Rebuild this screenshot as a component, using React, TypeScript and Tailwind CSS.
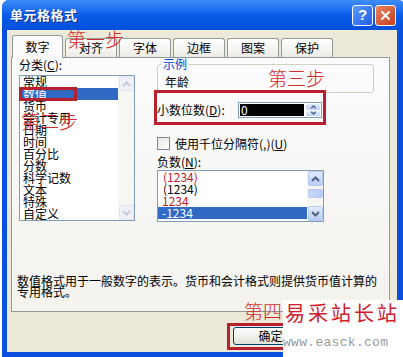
import React from 'react';

const categories = ['常规', '数值', '货币', '会计专用', '日期', '时间', '百分比', '分数', '科学记数', '文本', '特殊', '自定义'];

const negatives = [
  { text: '(1234)', red: true, pad: 'pl-[5px]' },
  { text: '(1234)', red: false, pad: 'pl-[5px]' },
  { text: '1234', red: true, pad: 'pl-[4px]' },
  { text: '-1234', red: false, pad: 'pl-[4px]' },
];

const tabs = ['对齐', '字体', '边框', '图案', '保护'];

// small chevron used by scroll and spin buttons
function Chevron({ up, color, w = 9, h = 6 }: { up?: boolean; color: string; w?: number; h?: number }) {
  return (
    <svg width={w} height={h} viewBox="0 0 9 6">
      <path d={up ? 'M1 5 L4.5 1.5 L8 5' : 'M1 1 L4.5 4.5 L8 1'} fill="none" stroke={color} strokeWidth="2" />
    </svg>
  );
}

function ArrowBtn({ up, disabled }: { up?: boolean; disabled?: boolean }) {
  return (
    <div
      className={
        disabled
          ? 'w-[15px] h-[15px] flex items-center justify-center rounded-[2px] border border-[#E2E6EE] bg-[#EEF0F5]'
          : 'w-[15px] h-[15px] flex items-center justify-center rounded-[2px] border border-[#B4C8F2] bg-linear-to-b from-[#E3ECFE] to-[#B8CCF9]'
      }
    >
      <Chevron up={up} color={disabled ? '#C4CBD9' : '#4D6185'} />
    </div>
  );
}

export default function App() {
  return (
    <div className="relative w-[403px] h-[357px] overflow-hidden bg-white font-['Noto_Sans_CJK_SC',sans-serif] text-[12px] leading-[12px] text-black">
      {/* Window frame */}
      <div className="ml-[2px] w-[403px] h-[357px] flex flex-col rounded-t-[7px] bg-[#0A4FDD]">
        {/* Title bar */}
        <div className="h-[30px] flex items-center pl-[8px] pr-[9px] rounded-t-[7px] bg-linear-to-b from-[#3D8EF8] via-[#0A5BEA] to-[#0650DB]">
          <span className="flex-1 text-white font-bold text-[13px] tracking-[0.5px] [text-shadow:1px_1px_0_#0A2C8A]">单元格格式</span>
          <div className="w-[21px] h-[21px] rounded-[3px] border border-white bg-linear-to-br from-[#5A9AFB] to-[#1E5FE8] flex items-center justify-center text-white font-bold text-[15px] font-['Liberation_Sans',sans-serif]">
            ?
          </div>
          <div className="ml-[2px] w-[21px] h-[21px] rounded-[3px] border border-white bg-linear-to-br from-[#E9825F] to-[#C73C16] flex items-center justify-center">
            <svg width="11" height="11" viewBox="0 0 11 11">
              <path d="M1.5 1.5 L9.5 9.5 M9.5 1.5 L1.5 9.5" stroke="white" strokeWidth="2" />
            </svg>
          </div>
        </div>

        {/* Dialog body */}
        <div className="flex-1 ml-[5px] mr-[8px] mb-[5px] bg-[#ECE9D8] flex flex-col">
          {/* Tabs */}
          <div className="h-[27px] flex items-end pl-[5px]">
            <div className="relative z-10 -mb-[1px] w-[51px] h-[23px] border border-b-0 border-[#919B9C] rounded-t-[3px] bg-[#FCFCFE] flex items-center justify-center">
              数字
            </div>
            {tabs.map((t) => (
              <div
                key={t}
                className="ml-[2px] w-[52px] h-[19px] border border-b-0 border-[#919B9C] rounded-t-[3px] bg-linear-to-b from-[#FFFFFF] to-[#ECEBE6] flex items-center justify-center"
              >
                {t}
              </div>
            ))}
          </div>

          {/* Tab page */}
          <div className="ml-[4px] mr-[7px] h-[255px] border border-[#919B9C] bg-linear-to-b from-[#FCFCFE] to-[#F3F2ED] flex flex-col">
            <div className="flex">
              {/* Category column */}
              <div className="pl-[7px] pt-[1px] flex flex-col">
                <span>
                  分类(<u>C</u>):
                </span>
                <div className="mt-[4px] w-[116px] h-[146px] border border-[#7F9DB9] bg-white flex">
                  <div className="flex-1 flex flex-col">
                    {categories.map((c) => (
                      <div key={c} className={c === '数值' ? 'h-[12px] pl-[3px] bg-[#316AC5] text-white' : 'h-[12px] pl-[3px]'}>
                        {c}
                      </div>
                    ))}
                  </div>
                  <div className="w-[16px] bg-[#F6F6F3] flex flex-col justify-between items-end">
                    <ArrowBtn up disabled />
                    <ArrowBtn disabled />
                  </div>
                </div>
              </div>

              {/* Options column */}
              <div className="ml-[22px] flex flex-col">
                <div className="relative mt-[6px] w-[217px] h-[29px] border border-[#D0D0BF] rounded-[3px] pl-[7px] pt-[11px]">
                  <span className="absolute -top-[7px] left-[3px] px-[2px] bg-[#FBFBFA] text-[#0046D5]">示例</span>
                  年龄
                </div>

                <div className="mt-[9px] h-[16px] flex items-center">
                  <span className="w-[81px]">
                    小数位数(<u>D</u>):
                  </span>
                  <div className="w-[84px] h-[16px] border border-[#7F9DB9] bg-white flex p-[1px]">
                    <div className="flex-1 bg-black text-white pl-[1px] leading-[12px]">0</div>
                    <div className="ml-[2px] w-[14px] flex flex-col gap-[1px]">
                      <div className="flex-1 rounded-[1px] bg-linear-to-b from-[#E3ECFE] to-[#BFD1FA] flex items-center justify-center">
                        <Chevron up color="#4D6185" w={7} h={4} />
                      </div>
                      <div className="flex-1 rounded-[1px] bg-linear-to-b from-[#E3ECFE] to-[#BFD1FA] flex items-center justify-center">
                        <Chevron color="#4D6185" w={7} h={4} />
                      </div>
                    </div>
                  </div>
                </div>

                <div className="mt-[19px] h-[13px] flex items-center">
                  <div className="w-[13px] h-[13px] border border-[#7A8794] bg-linear-to-br from-[#E6E6E0] to-[#FFFFFF]" />
                  <span className="ml-[5px]">
                    使用千位分隔符(,)(<u>U</u>)
                  </span>
                </div>

                <span className="mt-[6px]">
                  负数(<u>N</u>):
                </span>

                <div className="mt-[2px] w-[167px] h-[52px] border border-[#7F9DB9] bg-white flex">
                  <div className="flex-1 flex flex-col">
                    {negatives.map((n, i) => (
                      <div
                        key={i}
                        className={
                          i === 3
                            ? `h-[12px] ${n.pad} bg-[#316AC5] text-white`
                            : n.red
                              ? `h-[12px] ${n.pad} text-[#C0202A]`
                              : `h-[12px] ${n.pad}`
                        }
                      >
                        {n.text}
                      </div>
                    ))}
                  </div>
                  <div className="w-[16px] bg-[#F6F6F3] flex flex-col items-end">
                    <ArrowBtn up />
                    <div className="mt-[3px] w-[15px] h-[9px] rounded-[2px] border border-[#B4C8F2] bg-linear-to-r from-[#C9D8FC] to-[#B8CCF9]" />
                    <div className="flex-1" />
                    <ArrowBtn />
                  </div>
                </div>
              </div>
            </div>

            <p className="mt-[53px] pl-[5px] leading-[11px]">
              数值格式用于一般数字的表示。货币和会计格式则提供货币值计算的
              <br />
              专用格式。
            </p>
          </div>

          {/* Buttons */}
          <div className="flex pt-[15px] pl-[226px]">
            <div className="w-[75px] h-[18px] rounded-[3px] border border-[#003C74] bg-linear-to-b from-[#FFFFFF] to-[#E3E3DB] flex items-center justify-center">
              确定
            </div>
            <div className="ml-[6px] w-[75px] h-[18px] rounded-[3px] border border-[#003C74] bg-linear-to-b from-[#FFFFFF] to-[#E3E3DB] flex items-center justify-center">
              取消
            </div>
          </div>
        </div>
      </div>

      {/* Red annotation boxes */}
      <div className="absolute left-[17px] top-[37px] w-[44px] h-[19px] border-[3px] border-[#B8202E]" />
      <div className="absolute left-[19px] top-[87px] w-[58px] h-[14px] border-[3px] border-[#B8202E]" />
      <div className="absolute left-[154px] top-[90px] w-[172px] h-[35px] border-[3px] border-[#B8202E]" />
      <div className="absolute left-[227px] top-[323px] w-[70px] h-[27px] border-[3px] border-[#B8202E]" />

      {/* Step labels */}
      <span className="absolute left-[67px] top-[29px] text-[19px] leading-[19px] font-light text-[#D42A2A]">第一步</span>
      <span className="absolute left-[21px] top-[111px] text-[19px] leading-[19px] font-light text-[#D42A2A]">第二步</span>
      <span className="absolute left-[268px] top-[68px] text-[19px] leading-[19px] font-light text-[#D42A2A]">第三步</span>
      <span className="absolute left-[244px] top-[301px] text-[19px] leading-[19px] font-light text-[#D42A2A]">第四步</span>

      {/* Site watermark */}
      <div className="absolute left-[283px] top-[300px] w-[120px] h-[57px] bg-white flex flex-col">
        <span className="mt-[3px] ml-[2px] whitespace-nowrap text-[20px] leading-[20px] tracking-[3px] text-[#D0202C]">易采站长站</span>
        <span className="mt-[13px] whitespace-nowrap text-[13px] leading-[14px] tracking-[0.3px] text-[#9A9A9A] font-['Liberation_Mono',monospace]">www.easck.com</span>
      </div>
    </div>
  );
}
